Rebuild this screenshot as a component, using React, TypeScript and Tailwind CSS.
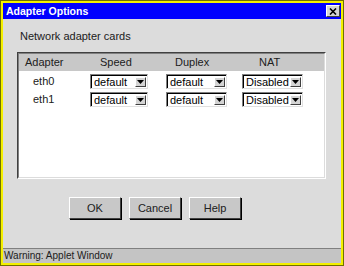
import React from 'react';

const font = { fontFamily: '"Liberation Sans", Arial, sans-serif' };

const Select = ({ value, width }: { value: string; width: string }) => (
  <div className={`${width} h-[15px] bg-white border border-t-[#808080] border-l-[#808080] border-r-[#e0e0e0] border-b-[#e0e0e0] flex items-center`}>
    <div className="flex-1 border-t border-l border-black h-full flex items-center pl-[2px] text-[11px] leading-none text-black overflow-hidden">
      {value}
    </div>
    <div className="w-[13px] h-full border-t border-black bg-white flex items-center justify-center py-[1px] pr-[1px] pl-[1px]">
      <div className="w-full h-full bg-[#d4d4d4] border border-t-white border-l-white border-r-[#404040] border-b-[#404040] flex items-center justify-center">
        <svg width="7" height="4" viewBox="0 0 7 4"><path d="M0 0h7L3.5 4z" fill="#000" /></svg>
      </div>
    </div>
  </div>
);

const Button = ({ label }: { label: string }) => (
  <button className="w-[52px] h-[22px] bg-[#c8c8c8] border border-t-white border-l-white border-r-[#404040] border-b-[#404040] text-[11px] text-[#202020] shadow-[1px_1px_0_#000]">
    {label}
  </button>
);

const rows = [
  { name: 'eth0', speed: 'default', duplex: 'default', nat: 'Disabled' },
  { name: 'eth1', speed: 'default', duplex: 'default', nat: 'Disabled' },
];

export default function App() {
  return (
    <div style={font} className="w-[344px] h-[266px] bg-[#f4f000] border border-[#707000] p-[2px] flex flex-col">
      {/* title bar */}
      <div className="h-[16px] bg-[#0000ff] flex items-center justify-between pl-[3px] pr-[1px]">
        <span className="text-white font-bold text-[10.5px] leading-none">Adapter Options</span>
        <div className="w-[14px] h-[12px] bg-[#d4d4d4] border border-t-white border-l-white border-r-[#404040] border-b-[#404040] flex items-center justify-center">
          <svg width="8" height="7" viewBox="0 0 8 7"><path d="M1 0.5L7 6.5M7 0.5L1 6.5" stroke="#000" strokeWidth="1.6" /></svg>
        </div>
      </div>

      {/* body */}
      <div className="flex-1 bg-[#dcdcdc] flex flex-col pl-[14px] pr-[15px]">
        <div className="mt-[11px] h-[12px] text-[11px] leading-[12px] text-[#202020] pl-[3px]">Network adapter cards</div>
        <div className="mt-[10px] h-[127px] border border-t-[#404040] border-l-[#404040] border-r-white border-b-white flex flex-col">
          <div className="flex-1 border border-t-[#808080] border-l-[#808080] border-r-[#dcdcdc] border-b-[#dcdcdc] flex flex-col bg-white">
            <div className="h-[17px] bg-[#c8c8c8] flex items-center text-[11px] text-[#202020]">
              <div className="w-[71px] pl-[6px]">Adapter</div>
              <div className="w-[76px] pl-[10px]">Speed</div>
              <div className="w-[76px] pl-[9px]">Duplex</div>
              <div className="pl-[17px]">NAT</div>
            </div>
            <div className="flex flex-col gap-[3px] pt-[3px]">
              {rows.map((r) => (
                <div key={r.name} className="h-[15px] flex items-center text-[11px] text-[#202020]">
                  <div className="w-[71px] pl-[14px]">{r.name}</div>
                  <div className="w-[76px]"><Select value={r.speed} width="w-[58px]" /></div>
                  <div className="w-[76px]"><Select value={r.duplex} width="w-[61px]" /></div>
                  <div><Select value={r.nat} width="w-[61px]" /></div>
                </div>
              ))}
            </div>
          </div>
        </div>
        <div className="mt-[18px] flex gap-[8px] pl-[52px]">
          <Button label="OK" />
          <Button label="Cancel" />
          <Button label="Help" />
        </div>
      </div>

      {/* status bar */}
      <div className="h-[15px] bg-[#c4c4c4] border-t border-[#808080] flex items-center pl-[1px] text-[10px] leading-none text-[#202020]">
        Warning: Applet Window
      </div>
    </div>
  );
}
